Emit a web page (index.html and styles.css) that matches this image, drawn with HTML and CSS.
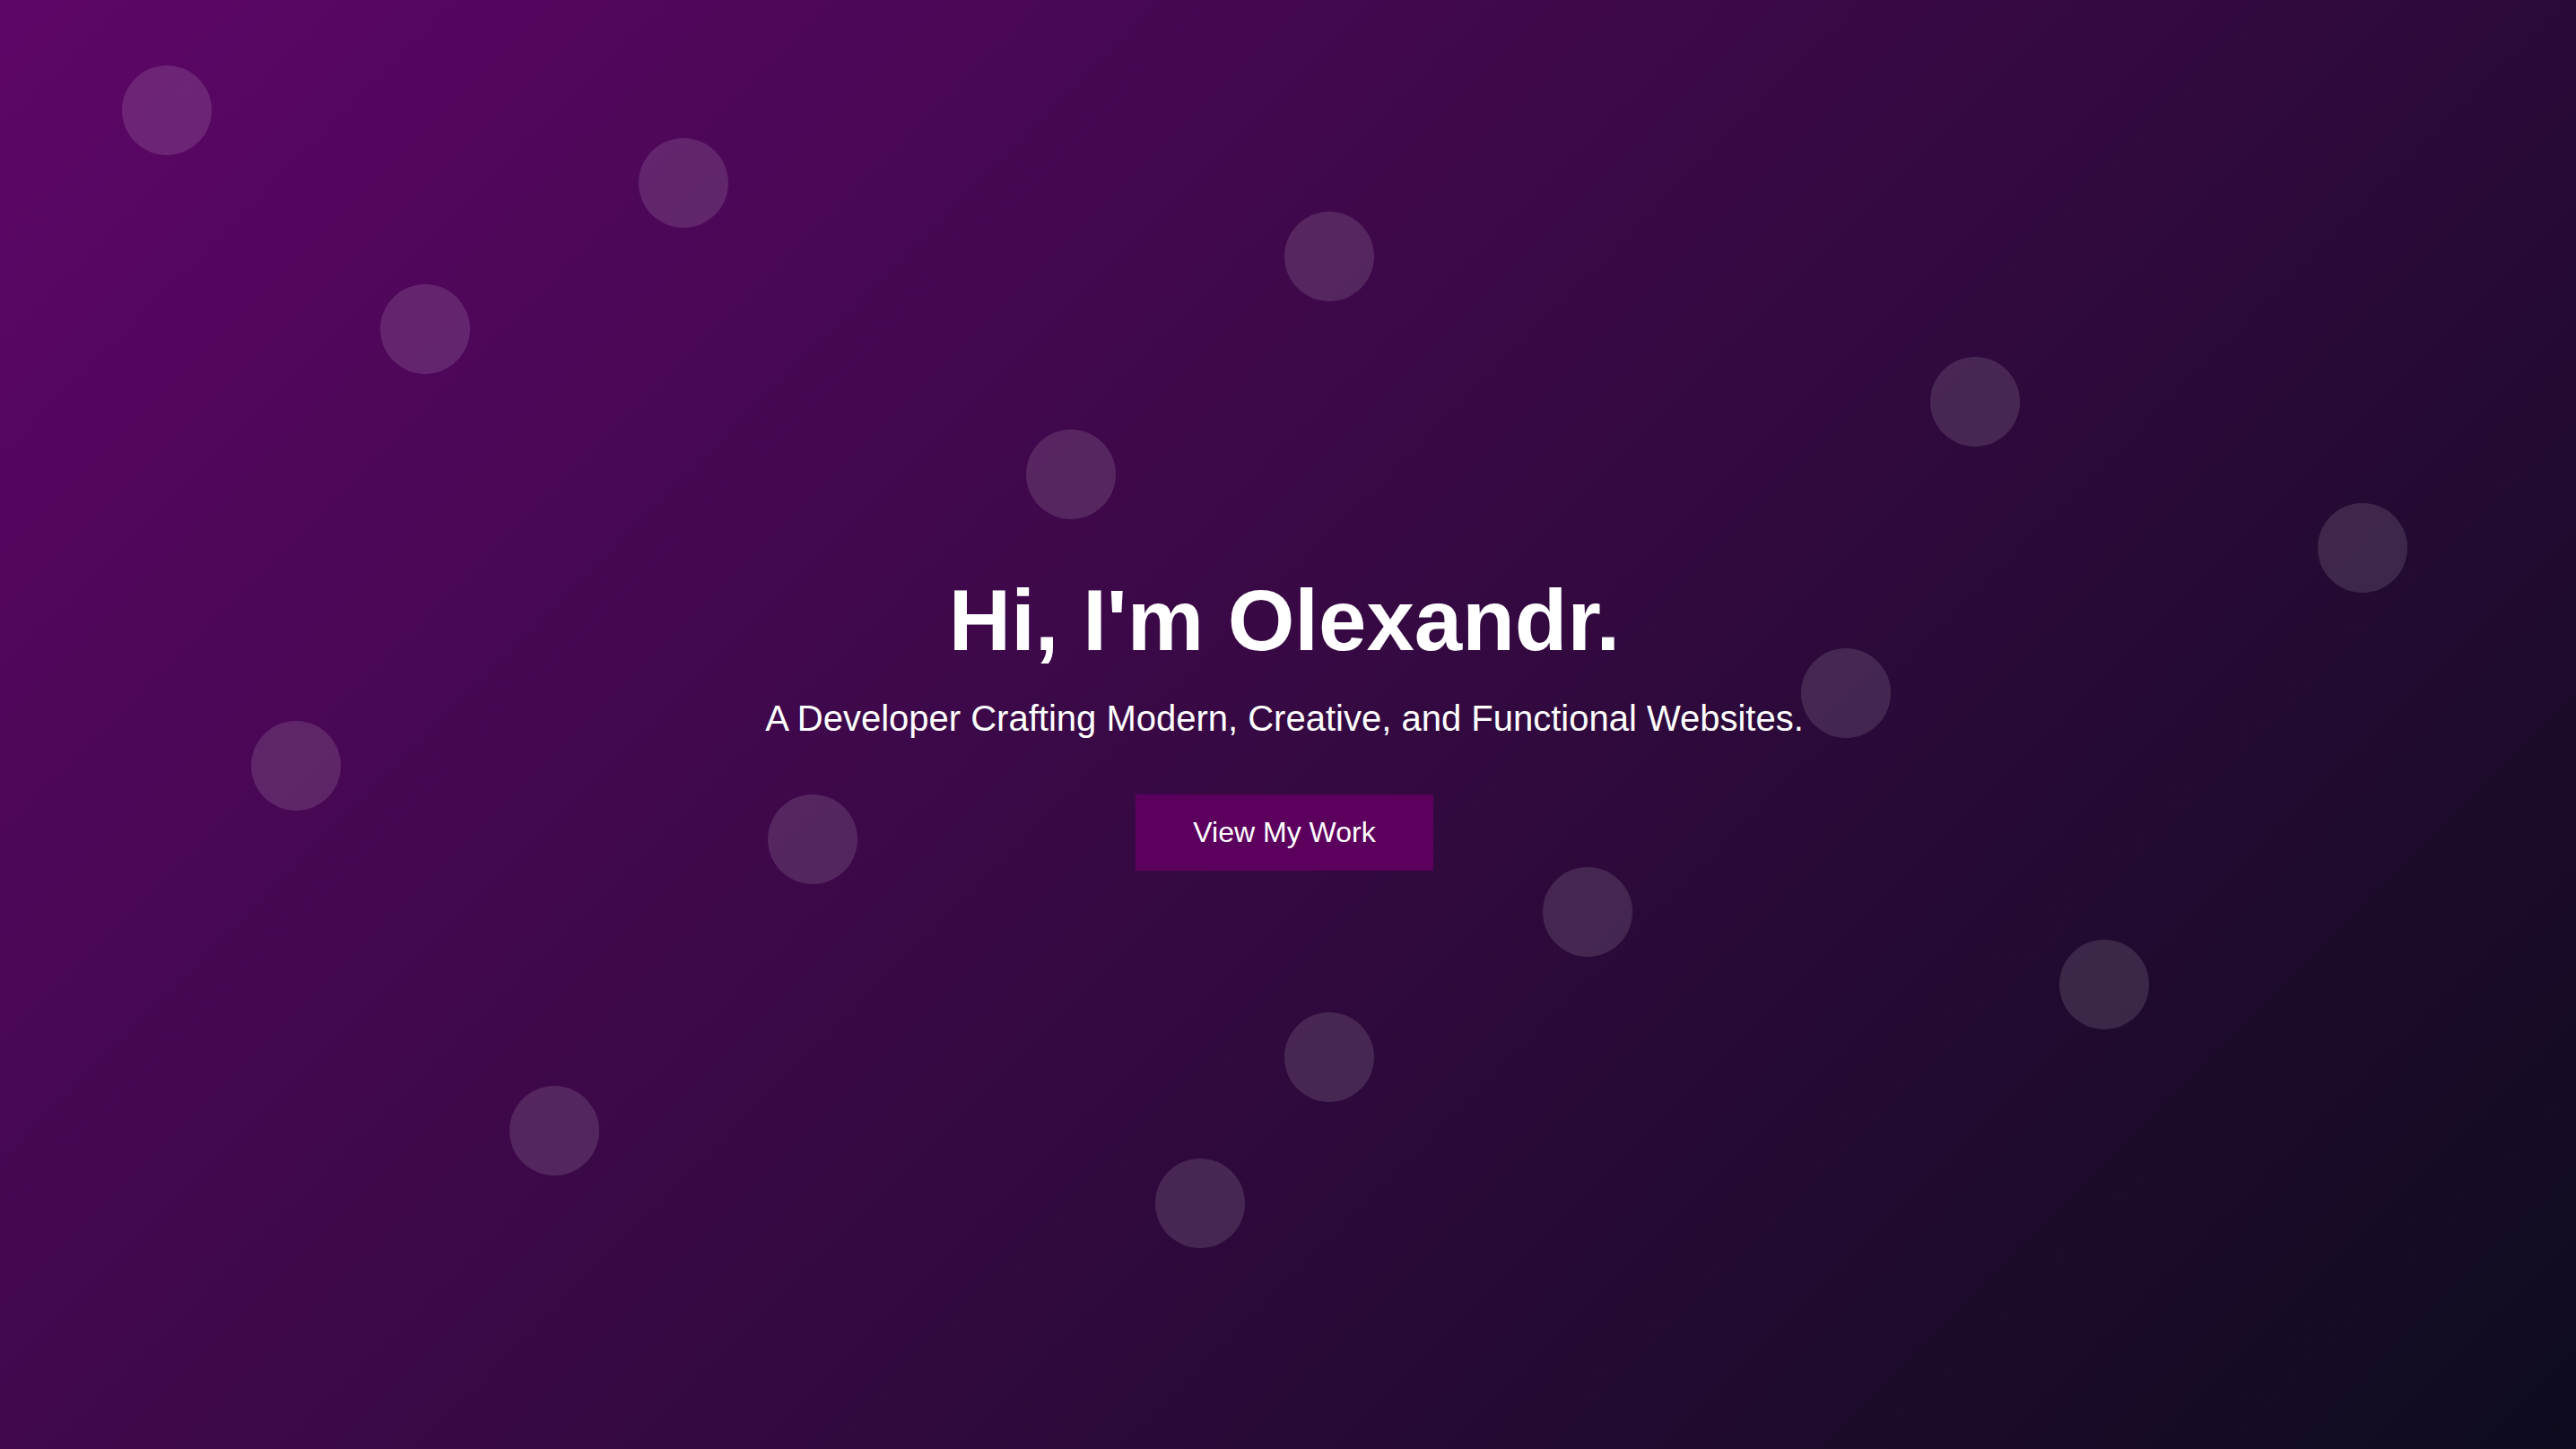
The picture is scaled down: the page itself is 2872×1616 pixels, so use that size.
FILE: index.html
```html
<!DOCTYPE html>
<html lang="en">
<head>
<meta charset="utf-8">
<title>Olexandr — Developer</title>
<link rel="stylesheet" href="styles.css">
</head>
<body>
<section class="hero">
  <div class="bubbles" aria-hidden="true">
    <span class="bubble" style="left:136px;top:73px"></span>
    <span class="bubble" style="left:712px;top:154px"></span>
    <span class="bubble" style="left:1432px;top:236px"></span>
    <span class="bubble" style="left:424px;top:317px"></span>
    <span class="bubble" style="left:2152px;top:398px"></span>
    <span class="bubble" style="left:1144px;top:479px"></span>
    <span class="bubble" style="left:2584px;top:561px"></span>
    <span class="bubble" style="left:2008px;top:723px"></span>
    <span class="bubble" style="left:280px;top:804px"></span>
    <span class="bubble" style="left:856px;top:886px"></span>
    <span class="bubble" style="left:1720px;top:967px"></span>
    <span class="bubble" style="left:2296px;top:1048px"></span>
    <span class="bubble" style="left:1432px;top:1129px"></span>
    <span class="bubble" style="left:568px;top:1211px"></span>
    <span class="bubble" style="left:1288px;top:1292px"></span>
  </div>
  <div class="hero-content">
    <h1 class="hero-title">Hi, I'm Olexandr.</h1>
    <p class="hero-subtitle">A Developer Crafting Modern, Creative, and Functional Websites.</p>
    <a class="hero-button" href="#work">View My Work</a>
  </div>
</section>
</body>
</html>
```

FILE: styles.css
```css
html, body {
  margin: 0;
  padding: 0;
}

body {
  font-family: "Liberation Sans", Arial, sans-serif;
  color: #ffffff;
  background: #0e0c1e;
}

.hero {
  position: relative;
  height: 100vh;
  overflow: hidden;
  background: linear-gradient(135deg, #5e0668 0%, #0e0c1e 100%);
  display: flex;
  align-items: center;
  justify-content: center;
  padding: 0 8px 8px 0;
  box-sizing: border-box;
}

.bubbles {
  position: absolute;
  inset: 0;
  pointer-events: none;
}

.bubble {
  position: absolute;
  width: 100px;
  height: 100px;
  border-radius: 50%;
  background: rgba(255, 255, 255, 0.12);
}

.hero-content {
  position: relative;
  display: flex;
  flex-direction: column;
  align-items: center;
  text-align: center;
}

.hero-title {
  margin: 0;
  font-size: 96px;
  font-weight: 700;
  line-height: normal;
}

.hero-subtitle {
  margin: 32px 0 62px;
  font-size: 40px;
  line-height: normal;
}

.hero-button {
  display: inline-block;
  padding: 24px 64px;
  background: #5c005e;
  color: #ffffff;
  font-size: 32px;
  text-decoration: none;
}
```
